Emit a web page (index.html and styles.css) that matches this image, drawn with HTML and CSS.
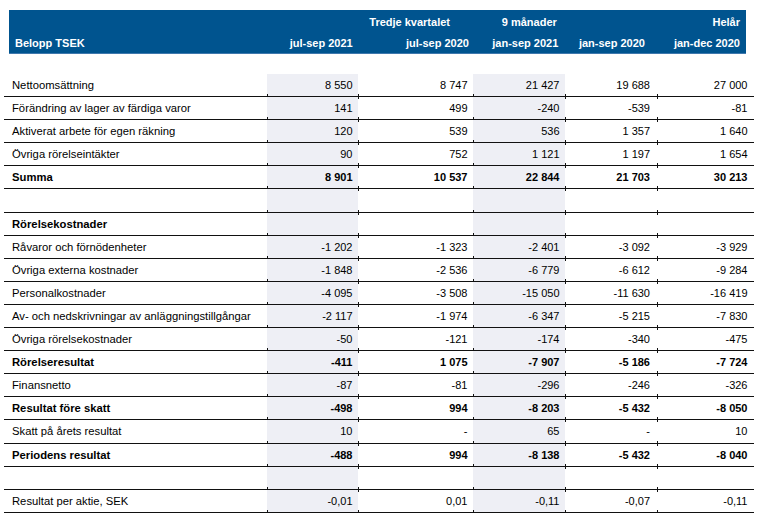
FILE: index.html
```html
<!DOCTYPE html>
<html lang="sv">
<head>
<meta charset="utf-8">
<title>Resultaträkning</title>
<link rel="stylesheet" href="styles.css">
</head>
<body>
<div class="page">
  <div class="head">
    <div class="h r1 c2 tk">Tredje kvartalet</div>
    <div class="h r1 c4 nm">9 månader</div>
    <div class="h r1 c6">Helår</div>
    <div class="h r2 c1 lbl">Belopp TSEK</div>
    <div class="h r2 c2">jul-sep 2021</div>
    <div class="h r2 c3">jul-sep 2020</div>
    <div class="h r2 c4">jan-sep 2021</div>
    <div class="h r2 c5">jan-sep 2020</div>
    <div class="h r2 c6">jan-dec 2020</div>
  </div>
  <div class="tbl">
    <div class="row"><div class="lab">Nettoomsättning</div><div class="num sh">8 550</div><div class="num">8 747</div><div class="num sh">21 427</div><div class="num">19 688</div><div class="num">27 000</div></div>
    <div class="row"><div class="lab">Förändring av lager av färdiga varor</div><div class="num sh">141</div><div class="num">499</div><div class="num sh">-240</div><div class="num">-539</div><div class="num">-81</div></div>
    <div class="row"><div class="lab">Aktiverat arbete för egen räkning</div><div class="num sh">120</div><div class="num">539</div><div class="num sh">536</div><div class="num">1 357</div><div class="num">1 640</div></div>
    <div class="row"><div class="lab">Övriga rörelseintäkter</div><div class="num sh">90</div><div class="num">752</div><div class="num sh">1 121</div><div class="num">1 197</div><div class="num">1 654</div></div>
    <div class="row bold"><div class="lab">Summa</div><div class="num sh">8 901</div><div class="num">10 537</div><div class="num sh">22 844</div><div class="num">21 703</div><div class="num">30 213</div></div>
    <div class="row"><div class="lab"></div><div class="num sh"></div><div class="num"></div><div class="num sh"></div><div class="num"></div><div class="num"></div></div>
    <div class="row bold"><div class="lab">Rörelsekostnader</div><div class="num sh"></div><div class="num"></div><div class="num sh"></div><div class="num"></div><div class="num"></div></div>
    <div class="row"><div class="lab">Råvaror och förnödenheter</div><div class="num sh">-1 202</div><div class="num">-1 323</div><div class="num sh">-2 401</div><div class="num">-3 092</div><div class="num">-3 929</div></div>
    <div class="row"><div class="lab">Övriga externa kostnader</div><div class="num sh">-1 848</div><div class="num">-2 536</div><div class="num sh">-6 779</div><div class="num">-6 612</div><div class="num">-9 284</div></div>
    <div class="row"><div class="lab">Personalkostnader</div><div class="num sh">-4 095</div><div class="num">-3 508</div><div class="num sh">-15 050</div><div class="num">-11 630</div><div class="num">-16 419</div></div>
    <div class="row"><div class="lab">Av- och nedskrivningar av anläggningstillgångar</div><div class="num sh">-2 117</div><div class="num">-1 974</div><div class="num sh">-6 347</div><div class="num">-5 215</div><div class="num">-7 830</div></div>
    <div class="row"><div class="lab">Övriga rörelsekostnader</div><div class="num sh">-50</div><div class="num">-121</div><div class="num sh">-174</div><div class="num">-340</div><div class="num">-475</div></div>
    <div class="row bold"><div class="lab">Rörelseresultat</div><div class="num sh">-411</div><div class="num">1 075</div><div class="num sh">-7 907</div><div class="num">-5 186</div><div class="num">-7 724</div></div>
    <div class="row"><div class="lab">Finansnetto</div><div class="num sh">-87</div><div class="num">-81</div><div class="num sh">-296</div><div class="num">-246</div><div class="num">-326</div></div>
    <div class="row bold"><div class="lab">Resultat före skatt</div><div class="num sh">-498</div><div class="num">994</div><div class="num sh">-8 203</div><div class="num">-5 432</div><div class="num">-8 050</div></div>
    <div class="row"><div class="lab">Skatt på årets resultat</div><div class="num sh">10</div><div class="num">-</div><div class="num sh">65</div><div class="num">-</div><div class="num">10</div></div>
    <div class="row bold"><div class="lab">Periodens resultat</div><div class="num sh">-488</div><div class="num">994</div><div class="num sh">-8 138</div><div class="num">-5 432</div><div class="num">-8 040</div></div>
    <div class="row"><div class="lab"></div><div class="num sh"></div><div class="num"></div><div class="num sh"></div><div class="num"></div><div class="num"></div></div>
    <div class="row"><div class="lab">Resultat per aktie, SEK</div><div class="num sh">-0,01</div><div class="num">0,01</div><div class="num sh">-0,11</div><div class="num">-0,07</div><div class="num">-0,11</div></div>
  </div>
</div>
</body>
</html>
```
FILE: styles.css
```css
html, body {
  margin: 0;
  padding: 0;
  background: #ffffff;
}
body {
  font-family: "Liberation Sans", Arial, sans-serif;
  color: #000000;
}
.page {
  padding-top: 10px;
  width: 761px;
}
.head {
  margin-left: 9px;
  width: 737px;
  height: 44px;
  box-sizing: border-box;
  padding: 2px 6px 0 0;
  background: #00548f;
  border-bottom: 1px solid #3f78ad;
  display: grid;
  grid-template-columns: 258px 85.7px 116.3px 89.3px 86.7px 95px;
  grid-template-rows: 21px 21px;
  color: #ffffff;
  font-size: 11px;
  font-weight: bold;
  line-height: 21px;
}
.h {
  text-align: right;
  white-space: nowrap;
}
.r1 { grid-row: 1; }
.r2 { grid-row: 2; }
.c1 { grid-column: 1; }
.c2 { grid-column: 2; }
.c3 { grid-column: 3; }
.c4 { grid-column: 4; }
.c5 { grid-column: 5; }
.c6 { grid-column: 6; }
.h.tk {
  grid-column: 2 / span 2;
  padding-right: 19px;
}
.h.nm {
  padding-right: 1.5px;
}
.h.lbl {
  text-align: left;
  padding-left: 6px;
}
.tbl {
  margin-top: 20px;
  margin-left: 4px;
  width: 750px;
}
.row {
  display: grid;
  grid-template-columns: 263px 91px 115px 92px 92px 97px;
  height: 23.1px;
  box-sizing: border-box;
  border-bottom: 1px solid #111111;
}
.row.bold {
  font-weight: bold;
}
.lab {
  font-size: 11.25px;
  line-height: 22px;
  padding-left: 8px;
  white-space: nowrap;
}
.num {
  position: relative;
  font-size: 11px;
  line-height: 22px;
  text-align: right;
  padding-right: 5.5px;
  white-space: nowrap;
}
.num:nth-child(5) {
  padding-right: 7px;
}
.num:nth-child(6) {
  padding-right: 6.5px;
}
.num.sh {
  background: #eeeff5;
}
.num::after {
  content: "";
  position: absolute;
  left: -0.5px;
  bottom: -3px;
  width: 1px;
  height: 5px;
  background: #111111;
}
```
